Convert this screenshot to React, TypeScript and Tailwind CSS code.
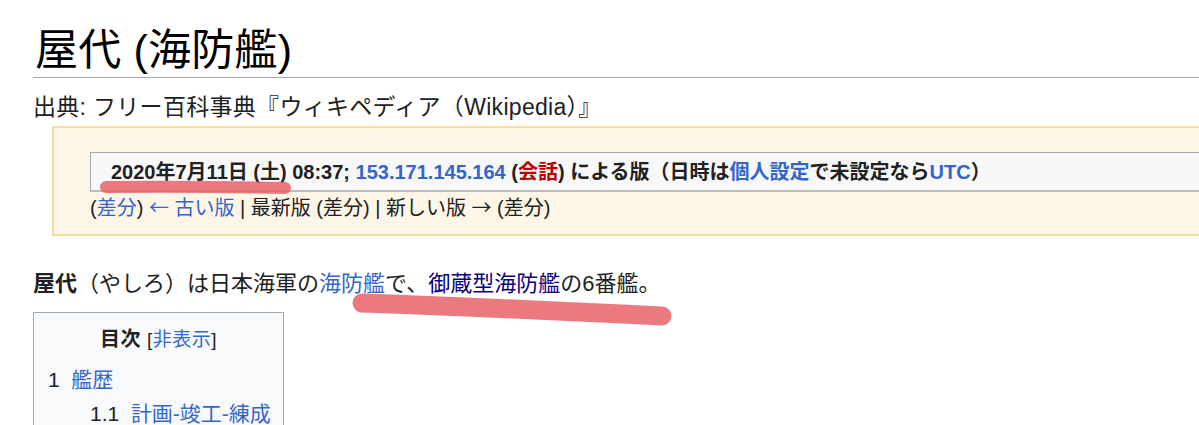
import React from 'react';

const FONT = { fontFamily: '"Liberation Sans", "Noto Sans CJK JP", sans-serif' };
const CJK = { fontFamily: '"Noto Sans CJK JP", sans-serif' };

const Link = ({ children, visited }: { children: React.ReactNode; visited?: boolean }) => (
  <a className={visited ? 'text-[#0b0080]' : 'text-[#3366cc]'}>{children}</a>
);

export default function App() {
  return (
    <div className="relative w-[1199px] h-[425px] overflow-hidden bg-white text-[#202122]" style={FONT}>
      <div className="pl-[33px]">
        {/* Title */}
        <h1 className="mt-[25px] pl-[2px] pb-[2px] text-[43px] leading-[50px] font-normal border-b border-[#a2a9b1] text-black tracking-[0.2px]">
          屋代 (海防艦)
        </h1>
        <div className="mt-[15px] text-[23px] leading-[28px] tracking-[0.3px]">出典: フリー百科事典『ウィキペディア（Wikipedia）』</div>

        {/* Revision notice */}
        <div className="mt-[5px] ml-[19px] w-[1200px] h-[110px] border-2 border-[#f5de9c] bg-[#fdf5e6] pt-[24px] pl-[36px]">
          <div className="h-[40px] flex items-center pl-[20px] bg-[#f8f8f8] border border-[#a8a8a8] border-b-2 border-b-[#bdbdbd] text-[20px] font-bold whitespace-nowrap">
            2020年7月11日 (土) 08:37;&nbsp;<Link>153.171.145.164</Link>&nbsp;(<a className="text-[#ba0000]">会話</a>) による版（日時は<Link>個人設定</Link>で未設定なら<Link>UTC</Link>）
          </div>
          <div className="mt-[3px] text-[20px] leading-[24px] whitespace-nowrap">
            (<Link>差分</Link>) <Link><span style={CJK}>←</span> 古い版</Link> | 最新版 (差分) | 新しい版 <span style={CJK}>→</span> (差分)
          </div>
        </div>

        {/* Lead paragraph */}
        <p className="mt-[35px] text-[22px] leading-[26px] whitespace-nowrap">
          <b>屋代</b>（やしろ）は日本海軍の<Link>海防艦</Link>で、<Link visited>御蔵型海防艦</Link>の6番艦。
        </p>

        {/* TOC */}
        <div className="mt-[15px] w-[251px] h-[140px] border border-[#a2a9b1] bg-[#f8f9fa] pt-[12px] text-[20px]">
          <div className="text-center leading-[28px] tracking-[0.5px]">
            <b>目次</b> <span className="text-[19px]">[<Link>非表示</Link>]</span>
          </div>
          <div className="mt-[10px] pl-[14px] text-[21px] leading-[31px]">
            <div>1&nbsp;&nbsp;<Link>艦歴</Link></div>
            <div className="pl-[42px] mt-[3px]">1.1&nbsp;&nbsp;<Link>計画-竣工-練成</Link></div>
          </div>
        </div>
      </div>

      {/* Highlighter marks */}
      <svg className="absolute inset-0 pointer-events-none" width="1199" height="425">
        <path d="M106 187 Q190 186 285 188" stroke="#e8636a" strokeOpacity="0.85" strokeWidth="12" strokeLinecap="round" fill="none" />
        <path d="M362 303 Q500 308 662 316" stroke="#e8636a" strokeOpacity="0.85" strokeWidth="19" strokeLinecap="round" fill="none" />
      </svg>
    </div>
  );
}
